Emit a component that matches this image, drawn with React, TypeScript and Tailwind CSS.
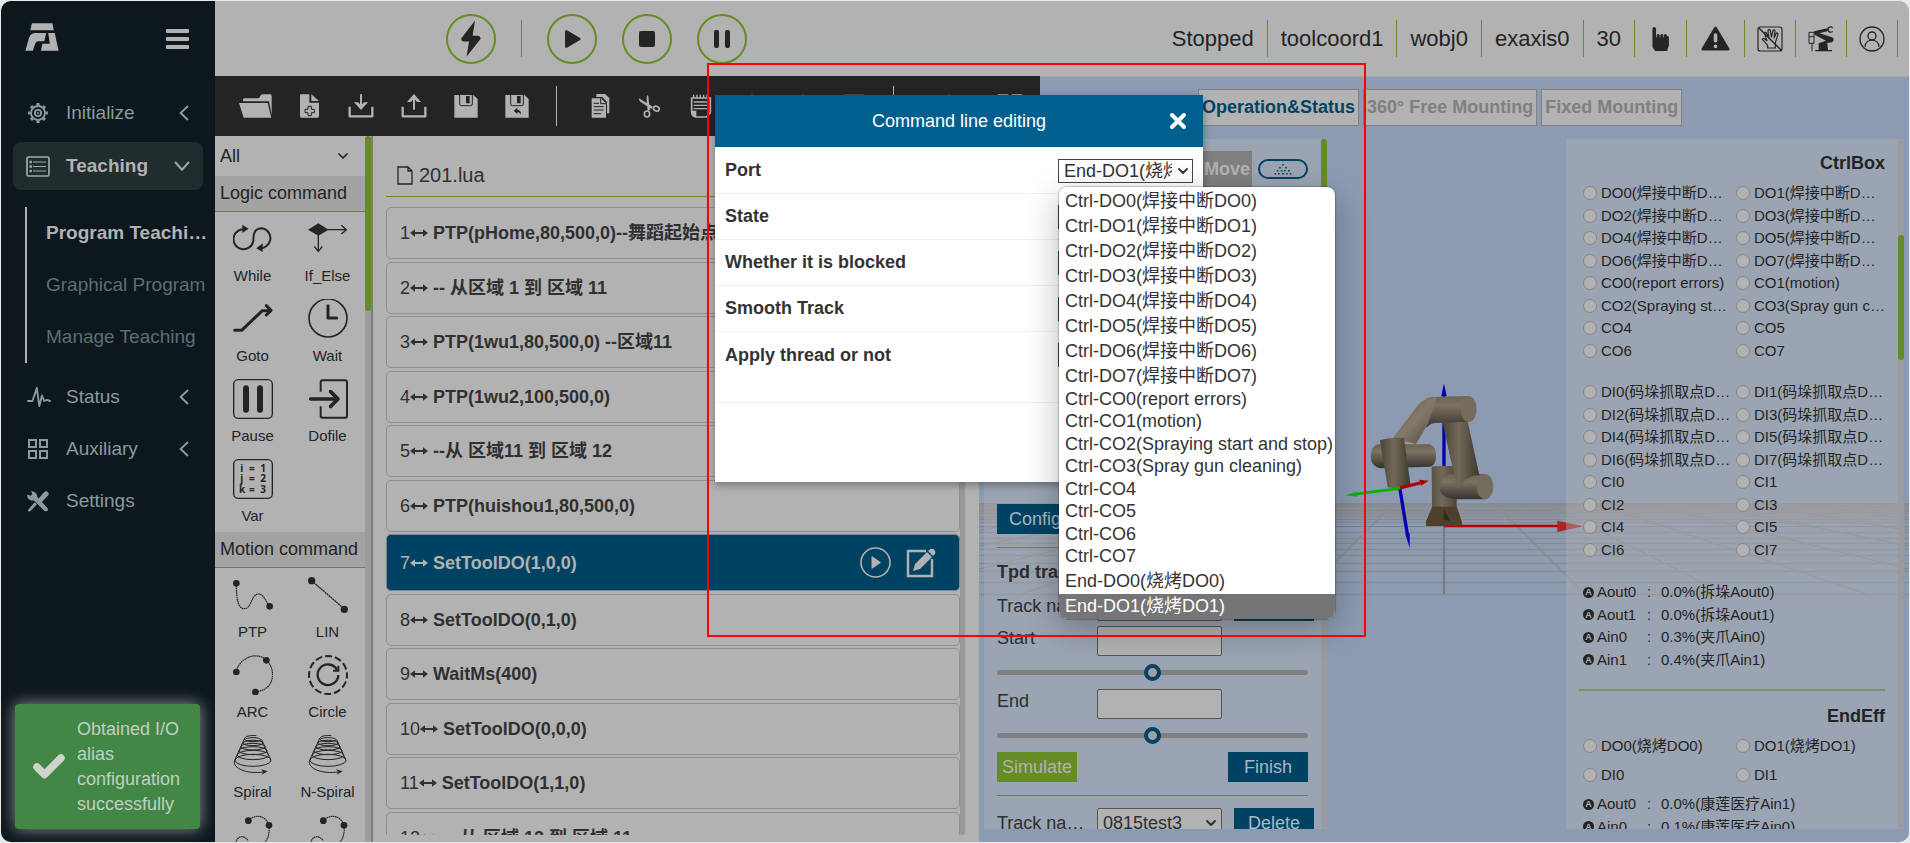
import React from "react";
import { Check, ChevronDown, X } from "lucide-react";

/* ---------- drawings ---------- */

type IconProps = { box: string; className: string; children: React.ReactNode };

function Icon({ box, className, children }: IconProps) {
  return (
    <svg viewBox={box} className={className} fill="none" stroke="none" aria-hidden="true">
      {children}
    </svg>
  );
}

const Logo = () => (
  <Icon box="75 68 102 86" className="h-[28px] w-[34px] text-[#b2b2b2]">
    <path fill="currentColor" d="M95 69H158L162 90H90Z" />
    <path fill="currentColor" d="M75 153L86 114Q91 99 106 99H139L133 124H116Q108 124 105 131L98 153Z" />
    <path fill="currentColor" d="M145 99H165L177 153H123L127 132H150Z" />
  </Icon>
);

const GearIcon = () => (
  <Icon box="0 0 24 24" className="h-[22px] w-[22px]">
    <g stroke="currentColor" strokeWidth="2">
      <circle cx="12" cy="12" r="7.6" />
      <circle cx="12" cy="12" r="3.4" />
      <path strokeWidth="3.4" d="M12 1.2V4M12 20v2.800M1.200 12H4M20 12h2.800M4.400 4.400l1.900 1.900M17.700 17.700l1.900 1.900M4.400 19.600l1.900-1.900M17.700 6.300l1.900-1.900" />
    </g>
    <circle cx="12" cy="12" r="1.200" fill="currentColor" />
  </Icon>
);

const ListIcon = () => (
  <Icon box="0 0 24 21" className="h-[21px] w-[24px]">
    <rect x="1" y="1" width="22" height="19" rx="1.500" stroke="currentColor" strokeWidth="1.700" />
    <path stroke="currentColor" strokeWidth="1.200" d="M7 6H20M7 10.500H20M7 15H20" />
    <path fill="currentColor" d="M3.500 4.800h2.400v2.400H3.500zM3.500 9.300h2.400v2.400H3.500zM3.500 13.800h2.400v2.400H3.500z" />
  </Icon>
);

const PulseIcon = () => (
  <Icon box="0 0 24 22" className="h-[22px] w-[24px]">
    <path stroke="currentColor" strokeWidth="1.900" strokeLinejoin="round" strokeLinecap="round" d="M1 15H5.500L9.800 2L12.300 20L15 9.500L17.200 15L20 13.800L23 15" />
  </Icon>
);

const GridIcon = () => (
  <Icon box="0 0 22 22" className="h-[22px] w-[22px]">
    <path stroke="currentColor" strokeWidth="2" d="M2 2h7v7H2zM13 2h7v7h-7zM2 13h7v7H2zM13 13h7v7h-7z" />
  </Icon>
);

const ToolsIcon = () => (
  <Icon box="80 580 64 62" className="h-[21px] w-[22px]">
    <path fill="currentColor" d="M84 584l12-3q13 3 14 17l28 30q6 6 2 10t-10 0l-30-30q-14 1-19-9l-1-9 10 4 5-5-2-6z" />
    <path fill="currentColor" d="M131 582q6-3 10 1t2 9l-26 27-10-9zM102 613l7 6-19 20-5 2-3-3 3-5z" />
  </Icon>
);

const ArrowLeft = () => (
  <Icon box="0 0 30 48" className="h-[16px] w-[10px]">
    <path stroke="currentColor" strokeWidth="6" d="M27 3L5 24 27 45" />
  </Icon>
);

const ArrowDown = () => (
  <Icon box="0 0 48 30" className="h-[10px] w-[16px]">
    <path stroke="currentColor" strokeWidth="6" d="M3 3L24 26 45 3" />
  </Icon>
);

const dark = "#242424";

const WhileIcon = () => (
  <Icon box="0 0 120 120" className="h-[40px] w-[40px]">
    <path stroke={dark} strokeWidth="6" d="M36 31A30 30 0 1 0 61 66C61 40 66 28 88 28A29 29 0 1 1 76 87" />
    <path fill={dark} d="M28 17l19 12-19 13zM89 73v26L70 88z" />
  </Icon>
);
const IfIcon = () => (
  <Icon box="0 0 120 120" className="h-[40px] w-[40px]">
    <path fill={dark} d="M0 32L31 13 62 32 31 50Z" />
    <path stroke={dark} strokeWidth="4" d="M60 32H114M31 48V97M100 19l15 13-15 13M19 82l12 15 12-15" />
  </Icon>
);
const GotoIcon = () => (
  <Icon box="0 0 120 120" className="h-[40px] w-[40px]">
    <path stroke={dark} strokeWidth="9" strokeLinecap="round" strokeLinejoin="round" d="M5 94H26L88 35H112" />
    <path stroke={dark} strokeWidth="9" strokeLinecap="round" strokeLinejoin="round" d="M100 20l14 14-14 14" />
  </Icon>
);
const WaitIcon = () => (
  <Icon box="0 0 120 120" className="h-[40px] w-[40px]">
    <circle cx="60" cy="57" r="57" stroke={dark} strokeWidth="5" />
    <path stroke={dark} strokeWidth="9" strokeLinecap="round" strokeLinejoin="round" d="M60 20V57H86" />
  </Icon>
);
const PauseIcon = () => (
  <Icon box="0 0 120 120" className="h-[40px] w-[40px]">
    <rect x="2" y="2" width="116" height="116" rx="14" stroke={dark} strokeWidth="4" />
    <path stroke={dark} strokeWidth="18" strokeLinecap="round" d="M39 28V92M81 28V92" />
  </Icon>
);
const DofileIcon = () => (
  <Icon box="0 0 120 120" className="h-[40px] w-[40px]">
    <path stroke={dark} strokeWidth="6" d="M38 38V10Q38 4 44 4H111Q117 4 117 10V110Q117 116 111 116H44Q38 116 38 110V82" />
    <path stroke={dark} strokeWidth="11" strokeLinecap="round" strokeLinejoin="round" d="M8 60H88M68 38L90 60 68 82" />
  </Icon>
);
const VarIcon = () => (
  <Icon box="0 0 120 120" className="h-[40px] w-[40px]">
    <rect x="2" y="2" width="116" height="116" rx="14" stroke={dark} strokeWidth="4" />
    <g fill={dark} fontFamily="'Noto Sans', sans-serif" fontWeight="700" fontSize="30">
      <text x="22" y="38">i</text><text x="48" y="38">=</text><text x="82" y="38">1</text>
      <text x="22" y="70">j</text><text x="48" y="70">=</text><text x="82" y="70">2</text>
      <text x="18" y="102">k</text><text x="48" y="102">=</text><text x="82" y="102">3</text>
    </g>
  </Icon>
);
const PtpIcon = () => (
  <Icon box="0 0 120 120" className="h-[40px] w-[40px]">
    <path stroke={dark} strokeWidth="3.500" strokeDasharray="5 1.500" d="M10 25C10 70 14 101 34 101C56 101 55 57 76 57C92 57 98 78 108 93" />
    <circle cx="10" cy="25" r="10" fill={dark} /><circle cx="110" cy="94" r="10" fill={dark} />
  </Icon>
);
const LinIcon = () => (
  <Icon box="0 0 120 120" className="h-[40px] w-[40px]">
    <path stroke={dark} strokeWidth="4" strokeDasharray="6 1.500" d="M11 17L109 102" />
    <circle cx="11" cy="17" r="11" fill={dark} /><circle cx="109" cy="103" r="11" fill={dark} />
  </Icon>
);
const ArcIcon = () => (
  <Icon box="0 0 120 120" className="h-[40px] w-[40px]">
    <path stroke={dark} strokeWidth="3.500" strokeDasharray="5 1.500" d="M10 51C16 12 68-14 100 15C132 46 124 108 66 110" />
    <circle cx="10" cy="51" r="10" fill={dark} /><circle cx="100" cy="16" r="10" fill={dark} /><circle cx="67" cy="111" r="10" fill={dark} />
  </Icon>
);
const CircleIcon = () => (
  <Icon box="0 0 120 120" className="h-[40px] w-[40px]">
    <circle cx="60" cy="60" r="57" stroke={dark} strokeWidth="6" strokeDasharray="21 8.800" strokeDashoffset="10" />
    <path stroke={dark} strokeWidth="7" d="M87 44A31 31 0 1 0 91 60" />
    <path stroke={dark} strokeWidth="6" d="M91 32V47H75" />
  </Icon>
);
const SpiralIcon = () => (
  <Icon box="0 0 120 120" className="h-[40px] w-[40px]">
    <g stroke={dark} strokeWidth="3">
      <path d="M70 2C50 0 36 4 34 12" />
      <ellipse cx="60" cy="14" rx="24" ry="6" /><ellipse cx="60" cy="24" rx="30" ry="8" />
      <ellipse cx="60" cy="35" rx="36" ry="10" /><ellipse cx="60" cy="47" rx="42" ry="12" />
      <ellipse cx="60" cy="60" rx="47" ry="14" /><ellipse cx="60" cy="76" rx="54" ry="18" />
      <path d="M34 12L4 78C0 100 40 118 92 111M86 14L114 76" />
    </g>
    <path fill={dark} d="M84 103l20 6-18 10 5-8z" />
  </Icon>
);
const HookIcon = () => (
  <Icon box="0 0 120 120" className="h-[40px] w-[40px]">
    <path stroke={dark} strokeWidth="3.500" strokeDasharray="5 1.500" d="M46 17C62-2 96-2 108 30C112 60 100 90 72 98M8 84C12 62 34 58 46 78" />
    <circle cx="46" cy="17" r="10" fill={dark} /><circle cx="108" cy="31" r="10" fill={dark} />
  </Icon>
);

const FolderIcon = () => (
  <Icon box="0 0 99 72" className="h-[24px] w-[33px]">
    <path fill="#b2b2b2" d="M12 22V16Q12 13 16 13H58Q62 12 64 6 66 1 71 1H94Q98 1 98 6V64L90 22Z" />
    <path fill="#b2b2b2" d="M0 27H86L97 71H14Z" />
  </Icon>
);
const FilePlusIcon = () => (
  <Icon box="0 0 66 72" className="h-[24px] w-[22px]">
    <path fill="#b2b2b2" d="M3 4Q3 1 6 1H31V26H60V67Q60 71 56 71H6Q3 71 3 67ZM37 1L60 21H37Z" />
    <path stroke={dark} strokeWidth="3" d="M27 37h10v9h9v10h-9v9H27v-9h-9V46h9z" />
  </Icon>
);
const TrayIcon = ({ up }: { up?: boolean }) => (
  <Icon box="0 0 78 72" className="h-[24px] w-[26px]">
    <path stroke="#b2b2b2" strokeWidth="7" strokeLinejoin="round" d="M5 38V67H73V38" />
    <path stroke="#b2b2b2" strokeWidth="6" d={up ? "M39 47V6" : "M39 1V42"} />
    <path fill="#b2b2b2" d={up ? "M39 0L60 24H48L39 13 30 24H18Z" : "M39 48L60 25H48L39 34 30 25H18Z"} />
  </Icon>
);
const SaveIcon = ({ back }: { back?: boolean }) => (
  <Icon box="0 0 72 72" className="h-[24px] w-[24px]">
    <path fill="#b2b2b2" d="M1 3H58L71 15V71H1Z" />
    <path stroke={dark} strokeWidth="3" d="M17 2V30Q17 35 22 35H50Q55 35 55 30V2" />
    <path fill={dark} d="M36 6H47V28H36Z" />
    {back && <path fill={dark} d="M26 50L37 41V47Q50 48 47 62 44 54 37 54V60Z" />}
  </Icon>
);
const CopyIcon = () => (
  <Icon box="0 0 60 72" className="h-[24px] w-[20px]">
    <path fill="#b2b2b2" d="M16 0H42L55 12V58H48V24L34 9H16Z" />
    <path fill="#b2b2b2" d="M2 13H30L45 28V71H2Z" />
    <path stroke={dark} strokeWidth="3" d="M8 28H24M8 38H38M8 48H38M8 59H30M29 13V29H45" />
  </Icon>
);
const ScissorsIcon = () => (
  <Icon box="0 0 72 72" className="h-[24px] w-[24px]">
    <path fill="#b2b2b2" d="M2 14Q5 13 8 16L44 38 40 45 8 24Q3 20 2 14ZM29 2Q33 8 32 18L36 48 29 52 26 20Q24 8 29 2Z" />
    <ellipse cx="27" cy="60" rx="8" ry="9" stroke="#b2b2b2" strokeWidth="5" />
    <ellipse cx="55" cy="44" rx="9" ry="7" stroke="#b2b2b2" strokeWidth="5" transform="rotate(25 55 44)" />
  </Icon>
);
const NoteIcon = () => (
  <Icon box="0 0 72 72" className="h-[24px] w-[24px]">
    <path stroke="#b2b2b2" strokeWidth="5" d="M8 12H64V56L52 69H20Q8 66 8 54Z" />
    <path stroke="#b2b2b2" strokeWidth="4" d="M14 2V12M24 2V12M34 2V12M44 2V12M54 2V12M14 24H58M14 34H58M14 44H58" />
    <path fill="#b2b2b2" d="M8 50H22V69Q9 66 8 50Z" />
  </Icon>
);
const UpIcon = () => (
  <Icon box="0 0 72 72" className="h-[24px] w-[24px]">
    <path fill="#b2b2b2" d="M36 1L60 28H44V70H28V28H12Z" />
  </Icon>
);
const BoxIcon = () => (
  <Icon box="0 0 72 72" className="h-[24px] w-[24px]">
    <path stroke="#b2b2b2" strokeWidth="6" d="M8 5H64V66H8Z" />
  </Icon>
);
const TilesIcon = () => (
  <Icon box="0 0 78 72" className="h-[24px] w-[26px]">
    <path fill="#b2b2b2" d="M2 1H34V32H2ZM44 1H76V32H44ZM2 40H34V71H2ZM44 40H76V71H44Z" />
  </Icon>
);

const ArrowBoth = () => (
  <Icon box="0 0 54 24" className="h-[8px] w-[18px] shrink-0">
    <path fill="currentColor" d="M0 12L15 1V9H39V1L54 12 39 23V15H15V23Z" />
  </Icon>
);

function Scene() {
  const bars = [510, 513, 516, 519, 522, 532, 538, 543, 549, 555, 563, 571, 582, 594];
  const rays = [-9, -8, -7, -6, -5, -4, -3, -2, -1, 1, 2, 3, 4, 5, 6, 7, 8, 9];
  return (
    <svg
      viewBox="979 77 930 765"
      preserveAspectRatio="xMinYMin slice"
      className="absolute inset-0 h-full w-full"
      aria-hidden="true"
    >
      <defs>
        <linearGradient id="tubeV" x1="0" x2="0" y1="0" y2="1">
          <stop offset="0" stopColor="#6b6252" /><stop offset=".3" stopColor="#7c7264" /><stop offset="1" stopColor="#35322a" />
        </linearGradient>
        <linearGradient id="tubeH" x1="0" x2="1" y1="0" y2="0">
          <stop offset="0" stopColor="#4a4437" /><stop offset=".45" stopColor="#73695a" /><stop offset="1" stopColor="#3c382d" />
        </linearGradient>
        <linearGradient id="fore" x1="0" x2="1" y1="0" y2="1">
          <stop offset="0" stopColor="#5c5446" /><stop offset=".5" stopColor="#857a6a" /><stop offset="1" stopColor="#4b4639" />
        </linearGradient>
        <linearGradient id="ground" x1="0" x2="0" y1="0" y2="1">
          <stop offset="0" stopColor="#88898b" /><stop offset="1" stopColor="#8c9bb2" stopOpacity="0" />
        </linearGradient>
      </defs>
      <rect x="979" y="503" width="1200" height="22" fill="url(#ground)" />
      <g stroke="#8a8b8e" strokeWidth="1.300">
        {bars.map((y) => (
          <path key={y} d={`M979 ${y + 0.5}H2179`} />
        ))}
        {rays.map((k) => (
          <path key={k} d={`M${1444 + k * 53} 506L${1444 + k * 141} 594`} />
        ))}
      </g>
      <path d="M979 526.500H2179" stroke="#78839a" />
      <g transform="translate(1320 360) scale(.3333)">
        <path d="M372 500V702" stroke="#737880" strokeWidth="5" />
        <path d="M372 100V320" stroke="#0000b4" strokeWidth="10" />
        <path d="M372 70L380 108H364Z" fill="#0000b4" />
        <path d="M372 498H715" stroke="#b40000" strokeWidth="8" />
        <path d="M712 482L790 499 712 516Z" fill="#b02222" />
        <path d="M335 320Q372 314 410 320V440L425 485V498H318V485L336 440Z" fill="url(#tubeH)" />
        <path d="M338 440H410L425 485V498H318V485Z" fill="#4d412c" />
        <path d="M372 448L390 484 371 478Z" fill="#2f2a20" />
        <path d="M400 342H495V418H410Q360 414 358 384 362 346 400 342Z" fill="url(#tubeV)" />
        <path d="M366 180H442L478 345Q440 345 412 388Z" fill="url(#tubeH)" />
        <ellipse cx="495" cy="380" rx="25" ry="38" fill="#756b5d" />
        <path d="M320 114Q330 110 445 108V185L345 189Q328 190 320 204Z" fill="url(#tubeV)" />
        <ellipse cx="446" cy="147" rx="24" ry="39" fill="#766c5e" />
        <path d="M218 235L290 140Q310 112 350 112L325 190 288 252Z" fill="url(#fore)" />
        <path d="M175 253H330Q350 262 348 290 346 318 330 320L180 325Q152 318 152 288 154 256 175 253Z" fill="url(#tubeV)" />
        <path d="M180 241Q210 230 252 234L272 378Q240 390 203 382Z" fill="url(#tubeH)" />
        <path d="M240 384L300 369" stroke="#a80000" strokeWidth="9" />
        <path d="M326 362L298 359 303 377Z" fill="#a80000" />
        <path d="M240 385L108 402" stroke="#00b400" strokeWidth="8" />
        <path d="M78 406L110 395 112 410Z" fill="#00b400" />
        <path d="M240 388L262 522" stroke="#0000b4" strokeWidth="10" />
        <path d="M269 564L256 522 269 520Z" fill="#0000b4" />
      </g>
    </svg>
  );
}

/* ---------- side bar ---------- */

function NavItem({ icon, label, arrow }: { icon: React.ReactNode; label: string; arrow?: boolean }) {
  return (
    <a href="#" className="flex h-[52px] items-center px-[26px] text-[#8c999d]">
      <span className="flex w-[39px] items-center">{icon}</span>
      <span className="flex-1">{label}</span>
      {arrow && <ArrowLeft />}
    </a>
  );
}

function Sidebar() {
  return (
    <aside className="relative w-[214px] shrink-0 bg-[#0c181e] text-[19px]">
      <div className="flex h-[86px] items-start justify-between pt-[22px] pr-[26px] pl-[24px]">
        <a href="#" aria-label="Home"><Logo /></a>
        <button type="button" aria-label="Menu" className="mt-[6px] flex w-[23px] flex-col gap-[4px]">
          <span className="h-[4px] rounded-[1px] bg-[#b2b2b2]" />
          <span className="h-[4px] rounded-[1px] bg-[#b2b2b2]" />
          <span className="h-[4px] rounded-[1px] bg-[#b2b2b2]" />
        </button>
      </div>
      <nav>
        <NavItem icon={<GearIcon />} label="Initialize" arrow />
        <a href="#" className="mx-[12px] mt-[3px] flex h-[48px] items-center rounded-[8px] bg-[#212c2e] px-[13px] font-bold text-[#b2b2b2]">
          <span className="flex w-[40px] items-center text-[#9fa9ab]"><ListIcon /></span>
          <span className="flex-1">Teaching</span>
          <span className="text-[#9fa9ab]"><ArrowDown /></span>
        </a>
        <div className="mt-[17px] mb-[8px] ml-[24px] border-l-2 border-[#b2b2b2] text-[#5d6e74]">
          <a href="#" className="flex h-[52px] items-center pl-[19px] font-bold text-[#b2b2b2]">
            <span className="w-[162px] truncate">Program Teaching</span>
          </a>
          <a href="#" className="flex h-[52px] items-center pl-[19px] whitespace-nowrap">Graphical Program</a>
          <a href="#" className="flex h-[52px] items-center pl-[19px] whitespace-nowrap">Manage Teaching</a>
        </div>
        <NavItem icon={<PulseIcon />} label="Status" arrow />
        <NavItem icon={<GridIcon />} label="Auxiliary" arrow />
        <NavItem icon={<ToolsIcon />} label="Settings" />
      </nav>
      <div role="status" className="absolute bottom-[13px] left-[14px] flex h-[125px] w-[185px] items-center rounded-[4px] bg-[#438747] text-[18px] leading-[25px] text-[#bfd0c0] shadow-[0_0_16px_rgba(190,190,190,0.75)]">
        <span className="flex w-[62px] justify-center pl-[6px]"><Check size={36} strokeWidth={5} className="text-[#ccd4cc]" /></span>
        <p className="w-[112px]">Obtained I/O alias configuration successfully</p>
      </div>
    </aside>
  );
}

/* ---------- header ---------- */

function RoundButton({ label, children }: { label: string; children: React.ReactNode }) {
  return (
    <button type="button" aria-label={label} className="flex h-[50px] w-[50px] items-center justify-center rounded-full border-2 border-[#668c26]">
      {children}
    </button>
  );
}

const headItem = "flex h-[37px] items-center border-r border-[#668c26] px-[13px]";

function Header() {
  return (
    <header className="flex h-[75px] items-center justify-between bg-[#b2b2b2] pr-[11px] pl-[231px] text-[22px] text-[#242424]">
      <div className="flex items-center gap-[25px]">
        <RoundButton label="Enable">
          <Icon box="0 0 60 110" className="h-[37px] w-[20px]">
            <path fill={dark} d="M42 1L0 56Q1 64 8 64H24L17 109 59 56Q58 49 52 47H35Z" />
          </Icon>
        </RoundButton>
        <span className="h-[37px] w-px bg-[#668c26]" />
        <RoundButton label="Run">
          <Icon box="0 0 48 54" className="ml-[2px] h-[18px] w-[16px]">
            <path fill={dark} d="M0 5Q0-1 6 1L45 24Q49 27 45 30L6 53Q0 55 0 49Z" />
          </Icon>
        </RoundButton>
        <RoundButton label="Stop"><span className="h-[16px] w-[16px] rounded-[2px] bg-[#242424]" /></RoundButton>
        <RoundButton label="Pause">
          <span className="flex gap-[6px]">
            <span className="h-[18px] w-[5px] rounded-[2px] bg-[#242424]" />
            <span className="h-[18px] w-[5px] rounded-[2px] bg-[#242424]" />
          </span>
        </RoundButton>
      </div>
      <div className="flex items-center">
        <span className={headItem}>Stopped</span>
        <span className={headItem}>toolcoord1</span>
        <span className={headItem}>wobj0</span>
        <span className={headItem}>exaxis0</span>
        <span className={headItem}>30</span>
        <button type="button" aria-label="Drag" className="flex h-[37px] items-center border-r border-[#668c26] px-[17px]">
          <Icon box="0 0 51 73" className="h-[24px] w-[17px]">
            <path fill={dark} d="M1 5Q1 0 6 0T12 5V32H14V24Q18 18 23 24V32H25V24Q29 18 34 24V32H36V24Q40 18 45 24V28Q49 26 51 31V56Q50 62 47 66V69Q47 73 43 73H11Q7 73 7 69L2 63Q0 60 1 54Z" />
          </Icon>
        </button>
        <button type="button" aria-label="Warnings" className="flex h-[37px] items-center border-r border-[#668c26] px-[14px]">
          <Icon box="0 0 88 75" className="h-[25px] w-[29px]">
            <path fill={dark} d="M40 4Q44-2 48 4L86 68Q88 74 82 74H6Q0 74 2 68Z" />
            <path stroke="#b2b2b2" strokeWidth="11" strokeLinecap="round" d="M44 27L44 44M44 61V61.500" />
          </Icon>
        </button>
        <button type="button" aria-label="Touch" className="flex h-[37px] items-center border-r border-[#668c26] px-[12px]">
          <Icon box="0 0 78 78" className="h-[26px] w-[26px]">
            <rect x="3" y="3" width="72" height="72" rx="7" stroke={dark} strokeWidth="3.500" />
            <path stroke={dark} strokeWidth="3.500" strokeLinejoin="round" d="M32 66V58L16 40Q18 36 22 38L30 44 22 22Q24 17 28 20L35 34 33 13Q37 9 40 13L43 33 48 13Q52 10 54 14L51 36 58 21Q63 20 63 25L55 50V66Z" />
            <path stroke={dark} strokeWidth="4" d="M5 5L73 73" />
          </Icon>
        </button>
        <button type="button" aria-label="Robot" className="flex h-[37px] items-center border-r border-[#668c26] px-[12px]">
          <Icon box="0 0 78 78" className="h-[26px] w-[26px]">
            <path stroke={dark} strokeWidth="4" d="M74 5A8 8 0 1 0 74 16" />
            <path fill={dark} d="M18 16L58 7 60 15 34 22 72 34Q79 37 76 44L73 49 50 52H58L60 72H72V76H22V72H32V52L54 44 20 26Z" />
            <path stroke={dark} strokeWidth="3" d="M3 19H18V52H3ZM3 32H18M12 52V76" />
          </Icon>
        </button>
        <button type="button" aria-label="User" className="flex h-[37px] items-center border-r border-[#668c26] px-[12px]">
          <Icon box="0 0 78 78" className="h-[26px] w-[26px]">
            <circle cx="39" cy="39" r="36" stroke={dark} strokeWidth="4" />
            <circle cx="39" cy="30" r="12" stroke={dark} strokeWidth="4" />
            <path stroke={dark} strokeWidth="4" d="M18 62C20 36 58 36 60 62" />
          </Icon>
        </button>
      </div>
    </header>
  );
}

/* ---------- command palette ---------- */

function Command({ label, icon }: { label: string; icon: React.ReactNode }) {
  return (
    <button type="button" className="flex h-[80px] flex-col items-center pt-[7px] text-[15px] leading-[18px]">
      {icon}
      <span className="mt-[8px]">{label}</span>
    </button>
  );
}

const sectionHead = "h-[36px] border-b border-[#668c26] bg-[#a3a3a3] pl-[5px] text-[18px] leading-[35px]";

function Palette() {
  return (
    <div className="flex w-[158px] shrink-0 overflow-hidden border-r-2 border-[#7c7c7c] text-[#242424]">
      <div className="w-[150px]">
        <div className="relative flex h-[40px] items-center">
          <select aria-label="Command filter" className="w-full appearance-none bg-transparent pl-[5px] text-[18px] leading-[24px]">
            <option>All</option>
          </select>
          <ChevronDown size={16} strokeWidth={2.6} className="pointer-events-none absolute right-[14px]" />
        </div>
        <h2 className={sectionHead}>Logic command</h2>
        <div className="grid grid-cols-2">
          <Command label="While" icon={<WhileIcon />} />
          <Command label="If_Else" icon={<IfIcon />} />
          <Command label="Goto" icon={<GotoIcon />} />
          <Command label="Wait" icon={<WaitIcon />} />
          <Command label="Pause" icon={<PauseIcon />} />
          <Command label="Dofile" icon={<DofileIcon />} />
          <Command label="Var" icon={<VarIcon />} />
        </div>
        <h2 className={sectionHead}>Motion command</h2>
        <div className="grid grid-cols-2">
          <Command label="PTP" icon={<PtpIcon />} />
          <Command label="LIN" icon={<LinIcon />} />
          <Command label="ARC" icon={<ArcIcon />} />
          <Command label="Circle" icon={<CircleIcon />} />
          <Command label="Spiral" icon={<SpiralIcon />} />
          <Command label="N-Spiral" icon={<SpiralIcon />} />
          <Command label="" icon={<HookIcon />} />
          <Command label="" icon={<HookIcon />} />
        </div>
      </div>
      <div className="w-[6px] rounded-full bg-[#9c9c9c]">
        <div className="h-[175px] rounded-full bg-[#668c26]" />
      </div>
    </div>
  );
}

/* ---------- program editor ---------- */

const lines = [
  "PTP(pHome,80,500,0)--舞蹈起始点",
  "-- 从区域 1 到 区域 11",
  "PTP(1wu1,80,500,0) --区域11",
  "PTP(1wu2,100,500,0)",
  "--从 区域11 到 区域 12",
  "PTP(huishou1,80,500,0)",
  "SetToolDO(1,0,0)",
  "SetToolDO(0,1,0)",
  "WaitMs(400)",
  "SetToolDO(0,0,0)",
  "SetToolDO(1,1,0)",
  "-- 从 区域 12 到 区域 11",
];

function Editor() {
  return (
    <section className="flex flex-1 flex-col pt-[19px] pr-[14px] pb-[7px] pl-[13px] text-[#303030]">
      <div className="flex h-[42px] items-center gap-[6px] border-b border-[#668c26] pl-[11px] text-[20px] leading-[41px]">
        <Icon box="0 0 16 19" className="h-[19px] w-[16px]">
          <path stroke={dark} strokeWidth="1.300" d="M1 1H11L15 5V18H1ZM11 1V5H15" />
        </Icon>
        <h1>201.lua</h1>
      </div>
      <div className="mt-[10px] flex min-h-0 flex-1 overflow-hidden">
        <ol className="flex-1">
          {lines.map((text, i) => {
            const selected = i === 6;
            return (
              <li
                key={i}
                className={
                  selected
                    ? "flex h-[57px] items-center rounded-[5px] border border-[#83838b] bg-[#004262] px-[13px] text-[18px] whitespace-pre text-[#b2b2b2] odd:mb-[3px]"
                    : "flex h-[52px] items-center rounded-[5px] border border-[#8e8e96] px-[13px] text-[18px] whitespace-pre odd:mb-[3px] even:mb-[2px]"
                }
              >
                <span className="leading-[24px]">{i + 1}</span>
                <ArrowBoth />
                <strong className="ml-[5px] flex-1 leading-[24px]">{text}</strong>
                {selected && (
                  <span className="flex items-center gap-[15px] pr-[10px]">
                    <button type="button" aria-label="Run line">
                      <Icon box="0 0 31 31" className="h-[31px] w-[31px]">
                        <circle cx="15.500" cy="15.500" r="14.500" stroke="#b2b2b2" strokeWidth="1.600" />
                        <path fill="#b2b2b2" d="M11.500 10Q11.500 9 12.500 9.500L20.500 15Q21 15.500 20.500 16L12.500 21.500Q11.500 22 11.500 21Z" />
                      </Icon>
                    </button>
                    <button type="button" aria-label="Edit line">
                      <Icon box="0 0 30 30" className="h-[30px] w-[30px]">
                        <path stroke="#b2b2b2" strokeWidth="2.400" d="M20 3H2V28H26V11" />
                        <path fill="#b2b2b2" d="M7 23L9 16 21 4 26 9 14 21ZM22 3L24.500 1Q27 0 28.500 2T29 6L27 8Z" />
                      </Icon>
                    </button>
                  </span>
                )}
              </li>
            );
          })}
        </ol>
        <div className="w-[5px] rounded-full bg-[#999999]" />
      </div>
    </section>
  );
}

function Toolbar() {
  const rule = "mr-[7px] h-[40px] w-px bg-[#b2b2b2]";
  return (
    <div className="relative z-10 flex h-[60px] w-[825px] items-center gap-[27px] bg-[#242424] pl-[24px]">
      <button type="button" aria-label="Open"><FolderIcon /></button>
      <button type="button" aria-label="New"><FilePlusIcon /></button>
      <button type="button" aria-label="Import"><TrayIcon /></button>
      <button type="button" aria-label="Export"><TrayIcon up /></button>
      <button type="button" aria-label="Save"><SaveIcon /></button>
      <button type="button" aria-label="Save as"><SaveIcon back /></button>
      <span className={rule} />
      <button type="button" aria-label="Copy"><CopyIcon /></button>
      <button type="button" aria-label="Cut"><ScissorsIcon /></button>
      <button type="button" aria-label="Paste"><NoteIcon /></button>
      <button type="button" aria-label="Move up"><UpIcon /></button>
      <button type="button" aria-label="Move top"><UpIcon /></button>
      <button type="button" aria-label="Frame"><BoxIcon /></button>
      <span className={rule} />
      <button type="button" aria-label="Raise" className="flex w-[42px] justify-center"><UpIcon /></button>
      <button type="button" aria-label="Tiles"><TilesIcon /></button>
    </div>
  );
}

/* ---------- robot operation ---------- */

const blueButton = "h-[30px] w-[80px] shrink-0 bg-[#004262] text-[#a8b8c2]";
const field = "h-[30px] w-[125px] rounded-[2px] border border-[#555555] bg-[#b2b2b2]";

function Slider({ label }: { label: string }) {
  return (
    <input
      type="range"
      aria-label={label}
      className="my-[8px] block h-[17px] w-full appearance-none bg-transparent [&::-webkit-slider-runnable-track]:h-[5px] [&::-webkit-slider-runnable-track]:rounded-full [&::-webkit-slider-runnable-track]:bg-[#808080] [&::-webkit-slider-thumb]:-mt-[6px] [&::-webkit-slider-thumb]:h-[17px] [&::-webkit-slider-thumb]:w-[17px] [&::-webkit-slider-thumb]:appearance-none [&::-webkit-slider-thumb]:rounded-full [&::-webkit-slider-thumb]:border-[4px] [&::-webkit-slider-thumb]:border-[#004262] [&::-webkit-slider-thumb]:bg-[#a0a0a0]"
    />
  );
}

function TrackSelect({ id, value }: { id: string; value: string }) {
  return (
    <span className="relative flex items-center">
      <select id={id} className={"appearance-none pl-[5px] leading-[24px] " + field}>
        <option>{value}</option>
      </select>
      <ChevronDown size={16} strokeWidth={2.8} className="pointer-events-none absolute right-[3px]" />
    </span>
  );
}

function OperationPanel() {
  return (
    <div className="flex w-[343px] overflow-hidden bg-[#b2b2b2]/40 text-[18px] text-[#2c2e31]">
      <div className="w-[337px] pt-[12px] pl-[13px]">
        <div className="flex h-[36px] items-center justify-end pr-[13px]">
          <button type="button" className="h-[36px] bg-[#808080] px-[2px] font-bold text-[#b2b2b2]">Move</button>
          <button type="button" aria-label="Point table" className="ml-[6px] flex h-[20px] w-[50px] items-center justify-center rounded-full border-2 border-[#004262]">
            <Icon box="0 0 18 12" className="h-[12px] w-[18px]">
              <path fill="#004262" d="M8.200 1h1.600v1.600H8.200zM5.200 4h1.600v1.600H5.200zM11.200 4h1.600v1.600h-1.600zM2.800 7h1.600v1.600H2.800zM6.800 7h1.600v1.600H6.800zM10 7h1.600v1.600H10zM14 7h1.600v1.600H14zM.5 10h1.600v1.600H.5zM4 10h1.600v1.600H4zM8.200 10h1.600v1.600H8.200zM12 10h1.600v1.600H12zM15.800 10h1.600v1.600h-1.600z" />
            </Icon>
          </button>
        </div>
        <div className="mt-[317px] mr-[13px] border-b border-[#668c26] pb-[13px]">
          <button type="button" className="h-[30px] bg-[#004262] px-[12px] text-[#a8b8c2]">Configure</button>
        </div>
        <h2 className="mt-[12px] leading-[24px] font-bold">Tpd track</h2>
        <div className="mt-[7px] flex h-[30px] items-center">
          <label htmlFor="track-top" className="w-[88px] truncate">Track name</label>
          <span className="ml-[12px]"><TrackSelect id="track-top" value="0815test3" /></span>
          <button type="button" className={"ml-[12px] " + blueButton}>Load</button>
        </div>
        <div className="mt-[5px] mr-[13px]">
          <div className="flex items-start">
            <label htmlFor="start" className="w-[100px] leading-[24px]">Start</label>
            <input id="start" className={field} />
          </div>
          <Slider label="Start position" />
          <div className="flex items-start">
            <label htmlFor="end" className="w-[100px] leading-[24px]">End</label>
            <input id="end" className={field} />
          </div>
          <Slider label="End position" />
          <div className="flex justify-between border-b border-[#668c26] pb-[13px]">
            <button type="button" className="h-[30px] w-[80px] bg-[#668c26] text-[#b2b2b2]">Simulate</button>
            <button type="button" className={blueButton}>Finish</button>
          </div>
        </div>
        <div className="mt-[12px] flex h-[30px] items-center">
          <label htmlFor="track-bottom" className="w-[88px] truncate">Track name</label>
          <span className="ml-[12px]"><TrackSelect id="track-bottom" value="0815test3" /></span>
          <button type="button" className={"ml-[12px] " + blueButton}>Delete</button>
        </div>
      </div>
      <div className="w-[6px] rounded-full bg-[#999b9f]">
        <div className="h-[175px] rounded-full bg-[#668c26]" />
      </div>
    </div>
  );
}

/* ---------- inputs and outputs ---------- */

const outputs = [
  ...[0, 1, 2, 3, 4, 5, 6, 7].map((n) => `DO${n}(焊接中断DO${n})`),
  "CO0(report errors)",
  "CO1(motion)",
  "CO2(Spraying start and stop)",
  "CO3(Spray gun cleaning)",
  "CO4",
  "CO5",
  "CO6",
  "CO7",
];
const inputs = [
  ...[0, 1, 2, 3, 4, 5, 6, 7].map((n) => `DI${n}(码垛抓取点DI${n})`),
  ...[0, 1, 2, 3, 4, 5, 6, 7].map((n) => `CI${n}`),
];

function Signals({ items }: { items: string[] }) {
  return (
    <div className="grid auto-rows-[22px_23px] grid-cols-2">
      {items.map((item) => (
        <label key={item} className="flex min-w-0 items-center gap-[4px] pr-[4px]">
          <input type="radio" className="h-[14px] w-[14px] shrink-0 appearance-none rounded-full border border-[#868686] bg-[#b2b2b2]" />
          <span className="truncate leading-[22px]">{item}</span>
        </label>
      ))}
    </div>
  );
}

function Analogs({ items }: { items: [string, string][] }) {
  return (
    <dl className="grid auto-rows-[22px_23px]">
      {items.map(([name, value]) => (
        <div key={name} className="flex items-center leading-[22px]">
          <span className="flex h-[11px] w-[11px] items-center justify-center rounded-full bg-[#242424] text-[9px] font-bold text-[#b2b2b2]">A</span>
          <dt className="ml-[3px] w-[50px]">{name}</dt>
          <span className="w-[14px]">:</span>
          <dd>{value}</dd>
        </div>
      ))}
    </dl>
  );
}

function SignalPanel() {
  return (
    <div className="flex w-[338px] overflow-hidden bg-[#b2b2b2]/40 text-[15px] text-[#242424]">
      <div className="w-[332px] pt-[12px] pr-[9px] pl-[17px]">
        <h2 className="mb-[7px] pr-[4px] text-right text-[18px] leading-[24px] font-bold">CtrlBox</h2>
        <Signals items={outputs} />
        <div className="mt-[19px]"><Signals items={inputs} /></div>
        <div className="mt-[20px]">
          <Analogs
            items={[
              ["Aout0", "0.0%(拆垛Aout0)"],
              ["Aout1", "0.0%(拆垛Aout1)"],
              ["Ain0", "0.3%(夹爪Ain0)"],
              ["Ain1", "0.4%(夹爪Ain1)"],
            ]}
          />
        </div>
        <hr className="mt-[18px] mr-[4px] -ml-[4px] border-t-2 border-[#7b9560]" />
        <h2 className="mt-[13px] mb-[7px] pr-[4px] text-right text-[18px] leading-[24px] font-bold">EndEff</h2>
        <Signals items={["DO0(烧烤DO0)", "DO1(烧烤DO1)"]} />
        <div className="mt-[7px] mb-[7px]"><Signals items={["DI0", "DI1"]} /></div>
        <Analogs items={[["Aout0", "0.0%(康莲医疗Ain1)"], ["Ain0", "0.1%(康莲医疗Ain0)"]]} />
      </div>
      <div className="w-[6px] rounded-full bg-[#999b9f] pt-[96px]">
        <div className="h-[125px] rounded-full bg-[#668c26]" />
      </div>
    </div>
  );
}

function Workspace() {
  const tab = "h-[37px] border border-[#808080] bg-[#b2b2b2] px-[3px] text-[18px] font-bold";
  return (
    <section className="relative flex flex-1 flex-col border-t border-[#a3a6aa] bg-[#8c9bb2]">
      <Scene />
      <div className="relative flex gap-[4px] pt-[12px] pl-[219px]">
        <button type="button" className={tab + " text-[#004262]"}>Operation&amp;Status</button>
        <button type="button" className={tab + " text-[#808080]"}>360° Free Mounting</button>
        <button type="button" className={tab + " text-[#808080]"}>Fixed Mounting</button>
      </div>
      <div className="relative mt-[13px] mb-[13px] flex min-h-0 flex-1 justify-between pr-[5px] pl-[5px]">
        <OperationPanel />
        <SignalPanel />
      </div>
    </section>
  );
}

/* ---------- dialog ---------- */

const cjkPorts = [0, 1, 2, 3, 4, 5, 6, 7].map((n) => `Ctrl-DO${n}(焊接中断DO${n})`);
const plainPorts = [
  "Ctrl-CO0(report errors)",
  "Ctrl-CO1(motion)",
  "Ctrl-CO2(Spraying start and stop)",
  "Ctrl-CO3(Spray gun cleaning)",
  "Ctrl-CO4",
  "Ctrl-CO5",
  "Ctrl-CO6",
  "Ctrl-CO7",
];

function DialogRow({ id, label, value }: { id: string; label: string; value: string }) {
  return (
    <div className="flex h-[46px] items-center justify-between border-b border-[#f0f0f0] pr-[10px] pl-[10px]">
      <label htmlFor={id} className="font-bold">{label}</label>
      <span className="relative flex items-center">
        <select id={id} className="h-[24px] w-[135px] appearance-none border border-[#444444] bg-white pr-[20px] pl-[5px] leading-[22px]">
          <option>{value}</option>
        </select>
        <ChevronDown size={16} strokeWidth={2.8} className="pointer-events-none absolute right-[2px]" />
      </span>
    </div>
  );
}

function CommandDialog() {
  return (
    <div role="dialog" aria-label="Command line editing" className="absolute top-[95px] left-[715px] z-20 w-[488px] bg-white text-[18px] text-[#333333] shadow-[0_3px_8px_rgba(0,0,0,0.35)]">
      <div className="relative flex h-[52px] items-center justify-center bg-[#005f8e] text-white">
        <h2 className="leading-[24px]">Command line editing</h2>
        <button type="button" aria-label="Close" className="absolute right-[13px]"><X size={24} strokeWidth={4} /></button>
      </div>
      <div className="pb-[79px]">
        <div className="pt-px"><DialogRow id="port" label="Port" value="End-DO1(烧烤DO1)" /></div>
        <DialogRow id="state" label="State" value="0" />
        <DialogRow id="blocked" label="Whether it is blocked" value="No" />
        <DialogRow id="smooth" label="Smooth Track" value="No" />
        <div className="border-b border-[#f0f0f0] pb-[24px] [&>div]:border-b-0">
          <DialogRow id="thread" label="Apply thread or not" value="No" />
        </div>
      </div>
      <ul role="listbox" aria-label="Port" className="absolute top-[92px] left-[344px] w-[276px] overflow-hidden rounded-[8px] bg-white pt-[2px] whitespace-nowrap shadow-[0_10px_34px_rgba(0,0,0,0.28),0_0_1px_1px_rgba(0,0,0,0.2)]">
        {cjkPorts.map((p) => (
          <li key={p} role="option" aria-selected="false" className="h-[25px] pl-[6px] leading-[25px]">{p}</li>
        ))}
        {plainPorts.map((p) => (
          <li key={p} role="option" aria-selected="false" className="h-[22px] pl-[6px] leading-[20px] even:h-[23px]">{p}</li>
        ))}
        <li role="option" aria-selected="false" className="h-[25px] pl-[6px] leading-[25px]">End-DO0(烧烤DO0)</li>
        <li role="option" aria-selected="true" className="h-[25px] bg-[#757575] pl-[6px] leading-[25px] text-white">End-DO1(烧烤DO1)</li>
      </ul>
    </div>
  );
}

export default function App() {
  return (
    <div className="relative h-screen overflow-hidden bg-[#e8eae8] p-px font-['Liberation_Sans','Noto_Sans_CJK_SC',sans-serif]">
      <div className="flex h-full overflow-hidden rounded-[10px] bg-[#b2b2b2]">
        <Sidebar />
        <div className="flex min-w-0 flex-1 flex-col">
          <Header />
          <div className="flex min-h-0 flex-1">
            <div className="flex w-[764px] shrink-0 flex-col">
              <Toolbar />
              <div className="flex min-h-0 flex-1">
                <Palette />
                <Editor />
              </div>
            </div>
            <Workspace />
          </div>
        </div>
      </div>
      <CommandDialog />
      <div className="pointer-events-none absolute top-[63px] left-[707px] z-30 h-[574px] w-[659px] border-2 border-[#ff0000]" />
    </div>
  );
}
